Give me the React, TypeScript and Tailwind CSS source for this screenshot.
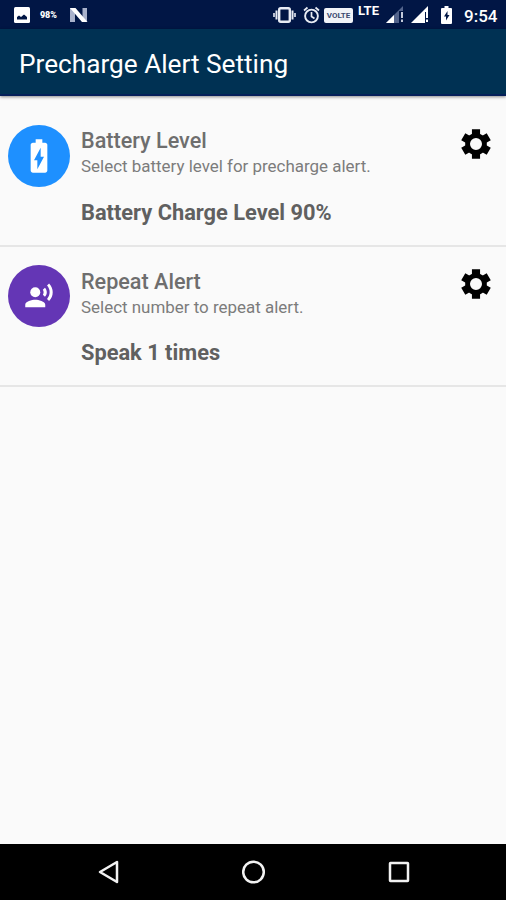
import type { ReactNode } from "react";
import { MdBatteryChargingFull, MdRecordVoiceOver } from "react-icons/md";

function StatusBar() {
  return (
    <div className="h-[29px] shrink-0 bg-[#011645] flex items-center text-white">
      <svg className="ml-3.5 w-4 h-4" viewBox="0 0 16 16">
        <rect width="16" height="16" rx="1.5" fill="#fff" />
        <path d="M3 12.5V10l2-1.500 2 1.500L10 7.500l3 2.500v2.500z" fill="#011645" />
      </svg>
      <span className="ml-2.5 mt-px w-[18px] text-[9px] leading-4 font-black tracking-[-0.1px] whitespace-nowrap">98%</span>
      <svg className="ml-3 w-[18px] h-4" viewBox="0 0 18 16">
        <path d="M0 15V1h5v14zM12.500 1H17v13l-4.500 1z" fill="#a9b2cb" />
        <path d="M0 1h5.500L17.500 15H12z" fill="#fff" />
      </svg>

      <svg className="ml-auto w-[23px] h-4" viewBox="0 0 23 16" fill="none" stroke="#e8ecf4">
        <rect x="6.2" y="1.2" width="10.6" height="13.6" rx="1.5" strokeWidth="2.4" />
        <path d="M3.500 3.500v9M19.500 3.500v9" strokeWidth="2" />
        <path d="M1 6v4M22 6v4" strokeWidth="1.600" />
      </svg>
      <svg className="ml-[7px] w-[17px] h-[18px]" viewBox="0 0 17 18" fill="none" stroke="#e8ecf4">
        <circle cx="8.500" cy="10" r="6.400" strokeWidth="1.900" />
        <path d="M8.500 6v4.500l3 2M1 4.500 4.500 1.500M16 4.500 12.500 1.500" strokeWidth="1.700" />
      </svg>
      <span className="ml-1 mt-px w-[29px] h-[15px] rounded-[2px] bg-[#f1f3f8] text-[#3b4a70] text-[8px] leading-[15px] font-bold text-center">VOLTE</span>
      <span className="ml-[5px] -mt-[7px] w-[22px] text-[13px] leading-3 font-bold whitespace-nowrap">LTE</span>
      <svg className="ml-1.5 w-[18px] h-[17px]" viewBox="0 0 18 17">
        <path d="M0 17 17 0v17z" fill="#53648c" />
        <path d="M0 17 8 9v8z" fill="#fff" />
        <path d="M13 5v12h4.500V5z" fill="#011645" />
        <path d="M16 6v6M16 13.500V16" stroke="#c3cadb" strokeWidth="2" />
      </svg>
      <svg className="ml-[7px] w-[18px] h-[17px]" viewBox="0 0 18 17">
        <path d="M0 17 17 0v17z" fill="#fff" />
        <path d="M14 6v11h4V6z" fill="#011645" />
        <path d="M16 6v6M16 13.500V16" stroke="#fff" strokeWidth="2" />
      </svg>
      <svg className="ml-3 w-[11px] h-[18px]" viewBox="0 0 11 18">
        <path d="M1 2h2.500V0h4v2H10q1 0 1 1v14q0 1-1 1H1q-1 0-1-1V3q0-1 1-1z" fill="#fff" />
        <path d="M6.500 5 3 10.500h2v4L8.500 9H6.500z" fill="#011645" />
      </svg>
      <span className="ml-3 mr-2 mt-0.5 w-[34px] text-[17px] leading-5 font-medium whitespace-nowrap">9:54</span>
    </div>
  );
}

function GearIcon() {
  return (
    <svg className="mt-[18.8px] size-[30px]" viewBox="-15.500 -15.500 31 31" fill="none" stroke="#000">
      <circle r="8.700" strokeWidth="5" />
      <path d="M0-6.800V-15.200M0 6.800V15.200" strokeWidth="8.400" />
      <path d="M0-6.800V-15.200M0 6.800V15.200" strokeWidth="8.400" transform="rotate(60)" />
      <path d="M0-6.800V-15.200M0 6.800V15.200" strokeWidth="8.400" transform="rotate(120)" />
    </svg>
  );
}

function SettingRow({ icon, color, title, hint, value }: {
  icon: ReactNode;
  color: string;
  title: string;
  hint: string;
  value: string;
}) {
  return (
    <div className="h-[140.5px] shrink-0 flex items-start border-b-2 border-[#e6e6e6] pl-2 pr-[15px]">
      <div className={`mt-[18.9px] size-[62px] rounded-full flex items-center justify-center text-white ${color}`}>
        {icon}
      </div>
      <div className="ml-[11px] flex-1 text-[#6e6e6e] whitespace-nowrap">
        <div className="mt-[21px] text-[21.6px] leading-7 font-medium">{title}</div>
        <div className="-mt-px text-[16.95px] leading-6 text-[#7c7c7c]">{hint}</div>
        <div className="mt-[20.5px] text-[21.8px] leading-7 font-bold text-[#606060]">{value}</div>
      </div>
      <div className="pt-1">
        <GearIcon />
      </div>
    </div>
  );
}

function NavBar() {
  return (
    <div className="h-14 shrink-0 bg-black flex items-center justify-between pl-[98px] pr-24">
      <svg className="w-[22px] h-6" viewBox="0 0 22 24" fill="none" stroke="#f2f2f2" strokeWidth="2.500">
        <path d="M19 2v20L2 12z" strokeLinejoin="round" />
      </svg>
      <svg className="size-6" viewBox="0 0 24 24" fill="none" stroke="#f2f2f2" strokeWidth="2.500">
        <circle cx="11.500" cy="12" r="10.300" />
      </svg>
      <svg className="w-[22px] h-6" viewBox="0 0 22 24" fill="none" stroke="#f2f2f2" strokeWidth="2.500">
        <rect x="2" y="3" width="18" height="18" rx="0.500" />
      </svg>
    </div>
  );
}

export default function App() {
  return (
    <div className="w-[506px] h-[900px] overflow-hidden flex flex-col bg-[#fafafa] font-[Roboto,sans-serif]">
      <StatusBar />
      <div className="relative h-[67px] shrink-0 bg-[#003153] flex items-center pl-[19px] border-b-2 border-[#05205a] shadow-[0_1px_3px_rgba(0,0,0,0.45)]">
        <h1 className="mt-1 text-[26.2px] leading-8 text-white whitespace-nowrap">Precharge Alert Setting</h1>
      </div>
      <div className="flex-1 pt-[10px] flex flex-col">
        <SettingRow
          icon={<MdBatteryChargingFull className="size-10" />}
          color="bg-[#1e90ff]"
          title="Battery Level"
          hint="Select battery level for precharge alert."
          value="Battery Charge Level 90%"
        />
        <SettingRow
          icon={<MdRecordVoiceOver className="size-[30px]" />}
          color="bg-[#6436b5]"
          title="Repeat Alert"
          hint="Select number to repeat alert."
          value="Speak 1 times"
        />
      </div>
      <NavBar />
    </div>
  );
}
